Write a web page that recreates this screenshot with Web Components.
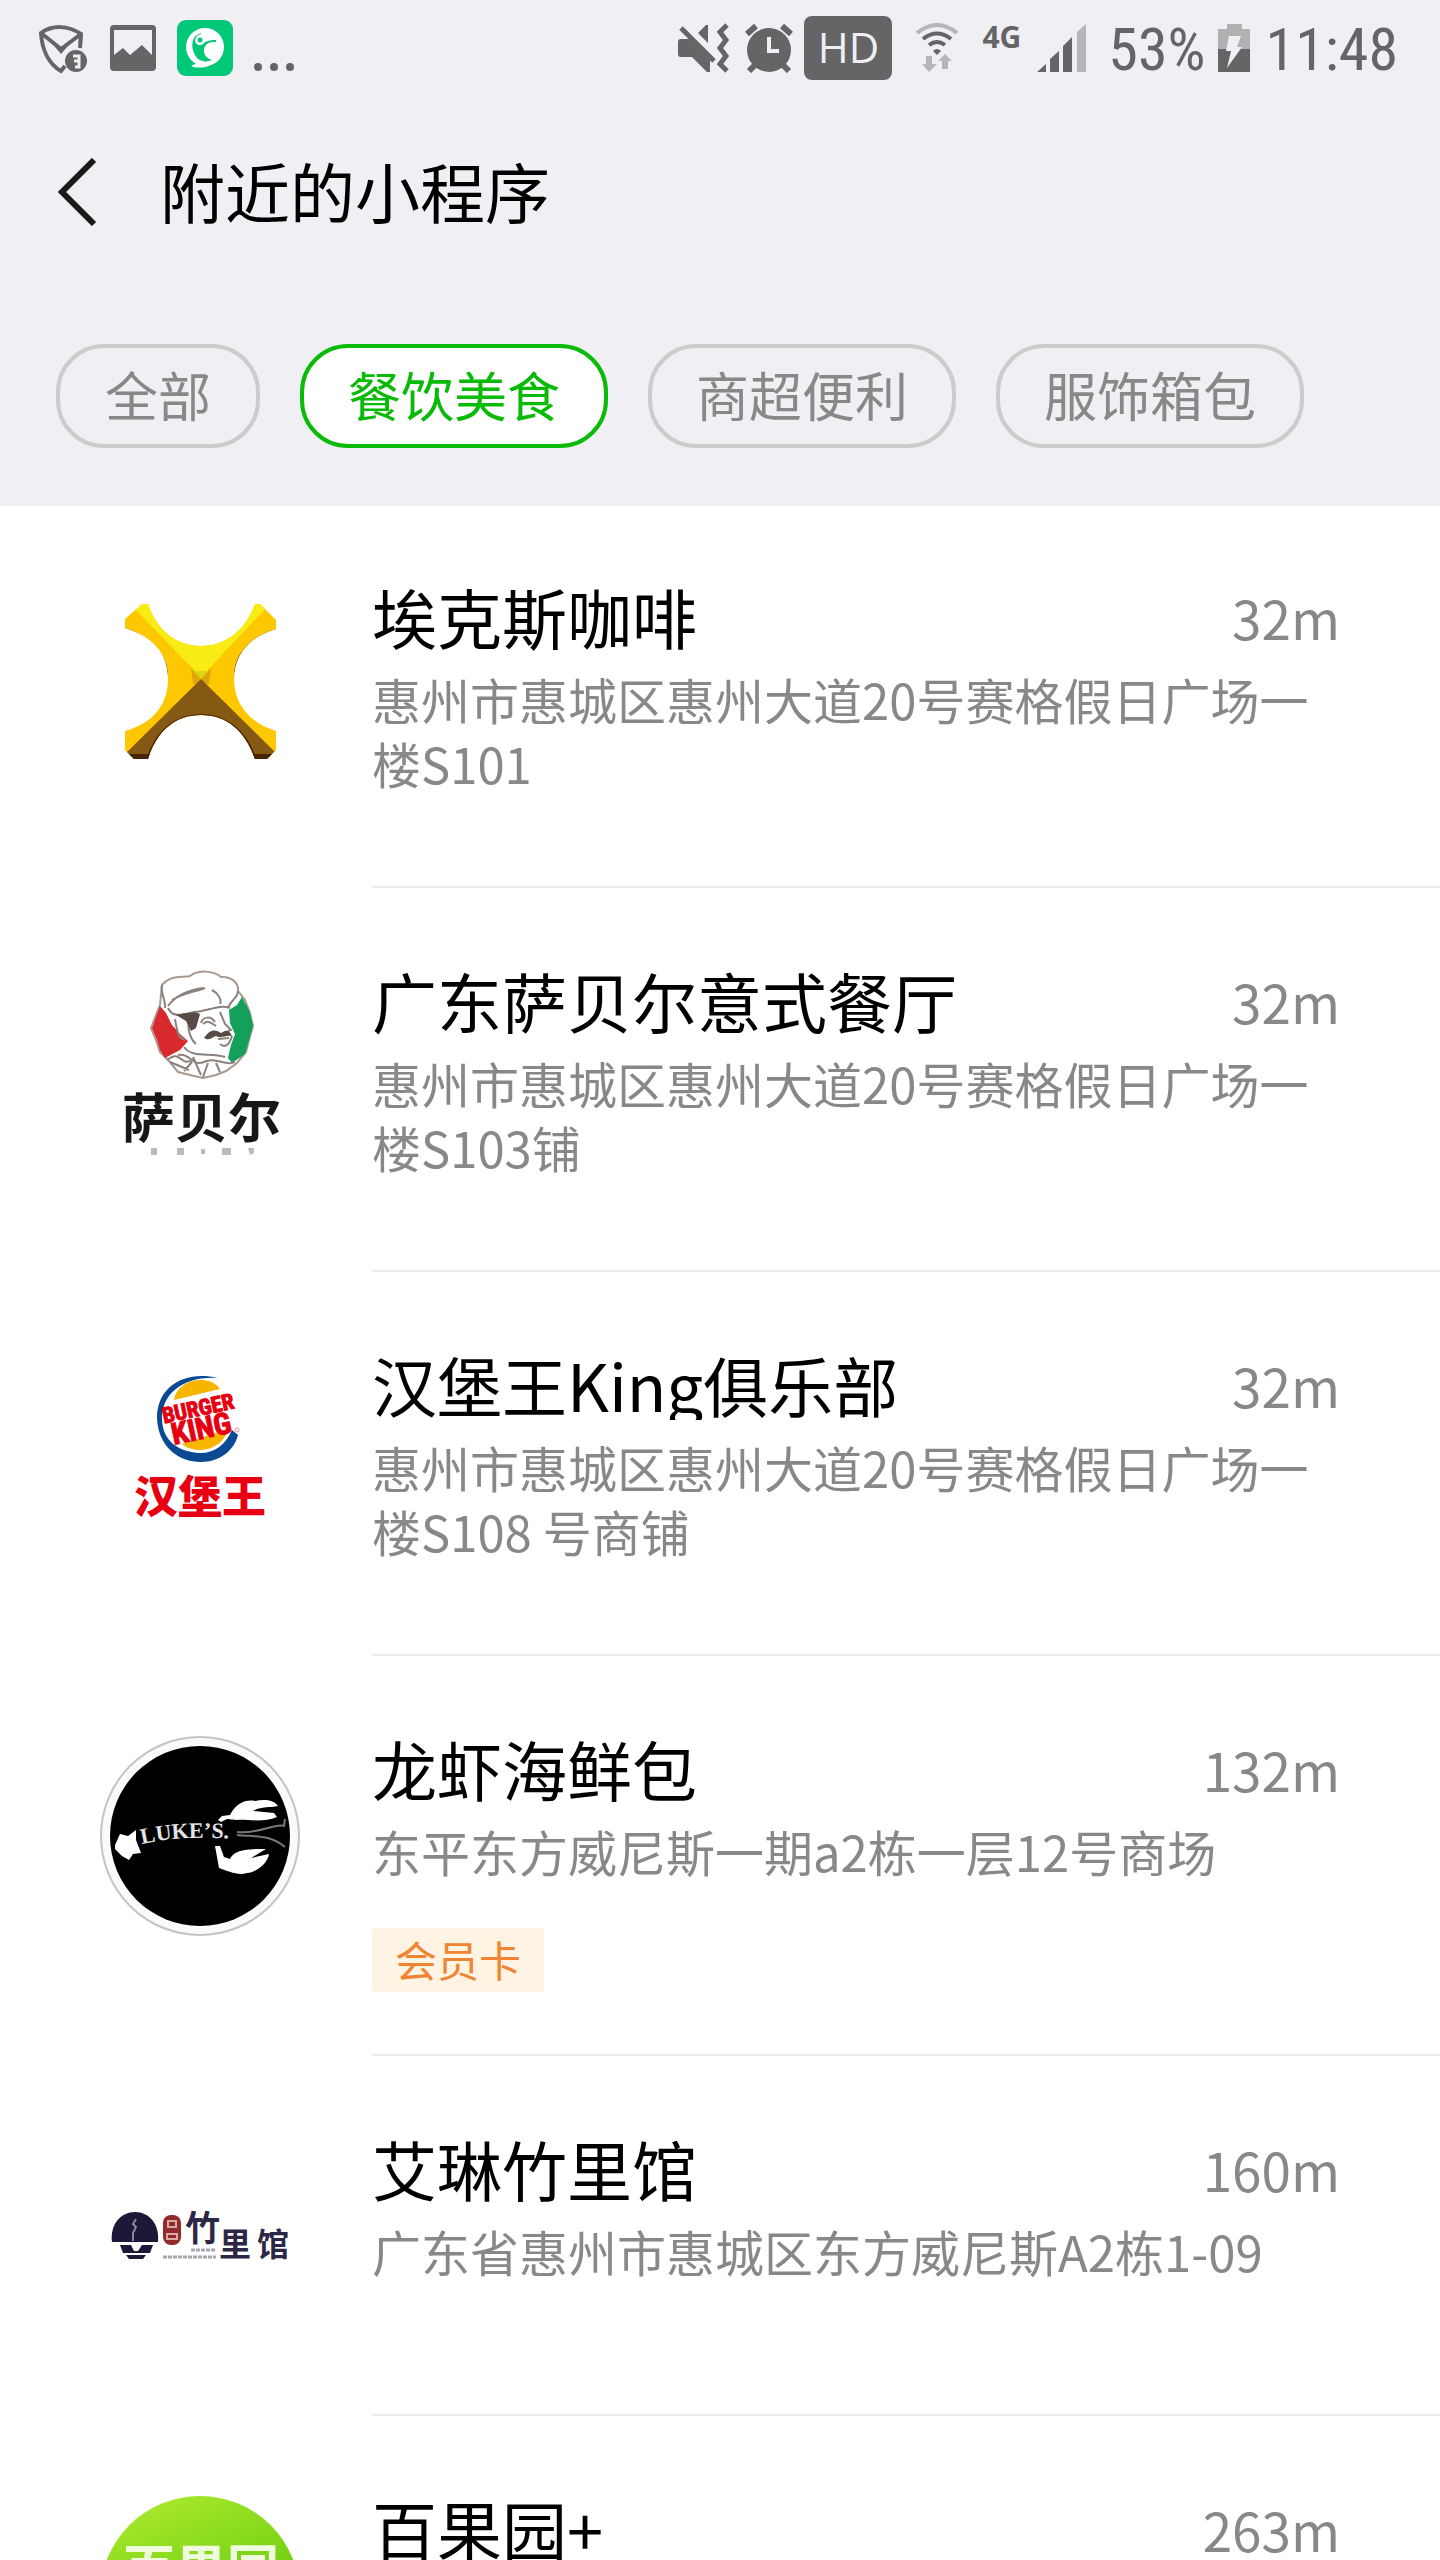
<!DOCTYPE html>
<html lang="zh-CN">
<head>
<meta charset="utf-8">
<meta name="viewport" content="width=device-width, initial-scale=1">
<title>附近的小程序</title>
<style>
    body {
        margin: 0;
        background: #fff;
        color: #000;
        font-family: 'Noto Sans CJK SC', 'Noto Sans', sans-serif;
    }
    nearby-page { --bar-bg: #efeff4; --green: #09bb07; --grey: #888; --line: #ececec; }
    svg text { font-family: 'Noto Sans CJK SC', sans-serif; }
    svg .latin { font-family: 'Roboto Condensed', Roboto, sans-serif; }
    svg .serif { font-family: 'Liberation Serif', serif; }
</style>
</head>
<body>
<nearby-page>
    <status-bar slot="header"></status-bar>
    <nav-bar slot="header">附近的小程序</nav-bar>
    <filter-bar slot="header">
        <filter-chip>全部</filter-chip>
        <filter-chip selected>餐饮美食</filter-chip>
        <filter-chip>商超便利</filter-chip>
        <filter-chip>服饰箱包</filter-chip>
    </filter-bar>

    <store-item distance="32m">
        <svg slot="logo" viewBox="0 0 200 200" aria-hidden="true">
            <clipPath id="x-shape">
                <path d="M42 20H48C57 47 77 62 101 62S145 47 155 20H160L176 36V45C149 53 134 71 134 95S149 139 176 147V166L167 175H155C145 146 126 131 101 131S57 146 48 175H34L25 166V147C53 139 68 121 68 95S53 53 25 44V35Z"/>
            </clipPath>
            <g clip-path="url(#x-shape)">
                <path fill="#fdc800" d="M20 15h160v165H20z"/>
                <path fill="#f7ec13" d="M30 20L101 93L170 20V10H30z"/>
                <path fill="#dda70c" d="M91 84l10 11 10-11-2 16H93z"/>
                <path fill="#dcd716" d="M94 87h14l-7 7z"/>
                <path fill="#855814" d="M101 95L182 175V185H20V175z"/>
                <path fill="none" stroke="#4a2408" stroke-width="4" d="M48 176C57 147 77 132 101 132S145 147 155 176"/>
                <path fill="#4a2408" d="M25 44C52 53 68 71 68 92C64 73 50 56 24 49zM176 45C149 53 134 71 134 92C138 73 152 56 177 49z"/>
                <path fill="#4a2408" d="M20 170h32v7H20zM151 170h30v7h-30z"/>
            </g>
        </svg>
        <span slot="name">埃克斯咖啡</span>
        惠州市惠城区惠州大道20号赛格假日广场一楼S101
    </store-item>

    <store-item distance="32m">
        <svg slot="logo" viewBox="0 0 200 200" aria-hidden="true">
            <path fill="#fff" stroke="#a99a90" stroke-width="2" d="M62 17C72 6 82 10 90 8C98 2 113 2 121 9C131 8 139 15 138 23L145 32L150 45L153 58L149 72L146 84L137 95L126 103L116 107L103 110L90 107L78 104L69 93L60 84L56 72L51 60L56 47L60 37Z"/>
            <path fill="#d8292f" d="M60 38L66 45L72 57L80 66L88 73L80 82L65 90L60 82L57 72L52 60Z"/>
            <path fill="#12a05a" d="M142 29L150 44L153 58L148 76L145 86L132 95L128 90L131 77L135 66L130 55L129 42L137 37Z"/>
            <g fill="none" stroke="#8a817c" stroke-width="2">
                <path d="M68 38C76 27 88 22 103 20M72 32C86 24 92 25 105 20M112 22C118 25 122 32 120 36M68 40C73 51 84 46 94 44C108 43 120 36 130 40M62 17C60 25 66 32 65 40M138 23C138 30 130 33 128 40"/>
                <path d="M67 92C82 80 80 101 94 91M78 87C91 85 92 99 104 94C115 88 126 99 135 94M84 79C93 91 110 84 125 89M84 103L92 94M103 109L108 95M120 104L116 95M93 89L101 107M70 94L89 102"/>
                <path d="M75 51C77 63 78 70 85 72M89 54C87 61 91 72 96 76M101 55C103 48 111 48 115 54M103 56C109 51 112 56 116 58M120 44L125 56L131 62L124 65M118 71L129 70M120 76C126 81 130 75 132 68"/>
            </g>
            <path fill="#594a45" d="M76 47C86 45 94 43 100 46L96 60L91 63L86 53ZM104 70C111 60 116 62 121 65C128 60 131 65 132 68C125 67 121 71 116 68C111 70 109 73 104 70Z"/>
            <text x="22" y="170" font-size="53" font-weight="700" fill="#171717">萨贝尔</text>
            <g fill="#bbb"><path d="M51 180h6v7h-6zM77 180h7v7h-7zM101 181h4v5h-4zM122 180h9v7h-9zM148 180h6v5l-4 2z"/></g>
        </svg>
        <span slot="name">广东萨贝尔意式餐厅</span>
        惠州市惠城区惠州大道20号赛格假日广场一楼S103铺
    </store-item>

    <store-item distance="32m">
        <svg slot="logo" viewBox="0 0 200 200" aria-hidden="true">
            <path fill="#f7b500" d="M74 48C76 35 88 28 101 28C110 28 117 32 120 37ZM82 92L128 77C125 90 114 97 101 98C94 98 87 96 82 92Z"/>
            <path fill="#0a4a94" d="M118 26C84 18 57 35 57 66C58 95 79 110 101 110C119 110 134 99 138 83L132 78C125 94 113 102 98 101C78 99 63 89 62 68C61 43 82 24 118 26Z"/>
            <g fill="#e60012" stroke="#e60012" stroke-width="1" text-anchor="middle" font-weight="700" transform="rotate(-12 99 66)">
                <text class="latin" x="100" y="64" font-size="22">BURGER</text>
                <text class="latin" x="99" y="87" font-size="30">KING</text>
            </g>
            <circle cx="137" cy="78" r="2" fill="none" stroke="#ef8a92"/>
            <text x="34" y="161" font-size="44" font-weight="900" fill="#e60012">汉堡王</text>
        </svg>
        <span slot="name">汉堡王King俱乐部</span>
        惠州市惠城区惠州大道20号赛格假日广场一楼S108 号商铺
    </store-item>

    <store-item distance="132m" tag="会员卡">
        <svg slot="logo" viewBox="0 0 200 200" aria-hidden="true">
            <circle cx="100" cy="100" r="99" fill="#fafafa" stroke="#c4c4c4" stroke-width="2"/>
            <circle cx="100" cy="100" r="90" fill="#000"/>
            <g fill="#fff">
                <path d="M15 109L20 98L28 100L36 94L36 104L41 117L33 118L29 124L22 120L15 113Z"/>
                <path d="M118 84L122 80L130 79C136 67 146 63 155 65C165 63 174 64 178 70C170 72 161 70 153 75L174 77L177 81C163 87 147 83 137 84L127 83L121 86Z"/>
                <path d="M115 110L120 110L124 121L130 123C135 113 148 114 155 113L166 113L151 122L169 118C168 127 157 136 147 137C138 140 128 135 119 132Z"/>
            </g>
            <path fill="none" stroke="#777" stroke-width="2" d="M137 96C157 99 177 86 184 90L185 83M137 99C155 101 170 98 185 111"/>
            <path id="luke-arc" fill="none" d="M42 108Q85 98 145 104"/>
            <text class="serif" font-size="22" font-weight="700" fill="#e4e4e4"><textPath href="#luke-arc">LUKE’S.</textPath></text>
        </svg>
        <span slot="name">龙虾海鲜包</span>
        东平东方威尼斯一期a2栋一层12号商场
    </store-item>

    <store-item distance="160m">
        <svg slot="logo" viewBox="0 0 200 200" aria-hidden="true">
            <path fill="#1d1838" d="M12 106C10 88 21 76 35 76S60 88 58 106ZM20 109H31L34 115H38L42 109H53L50 117H23ZM26 119H46L43 123H29Z"/>
            <path fill="none" stroke="#8b8798" stroke-width="2" d="M36 83L33 88L36 91L33 97V105"/>
            <rect x="63" y="79" width="18" height="30" rx="8" fill="#912a2b"/>
            <path fill="none" stroke="#dba9a5" stroke-width="2" d="M68 85h8v6h-8zM67 98h10v5H67z"/>
            <g fill="#2b2745" font-weight="700">
                <text x="85" y="105" font-size="35">竹</text>
                <text x="119" y="120" font-size="32">里</text>
                <text x="157" y="120" font-size="32">馆</text>
            </g>
            <path fill="none" stroke="#aaa6b0" stroke-width="3" stroke-dasharray="4 1" d="M91 114h24M63 121h53"/>
        </svg>
        <span slot="name">艾琳竹里馆</span>
        广东省惠州市惠城区东方威尼斯A2栋1-09
    </store-item>

    <store-item distance="263m">
        <svg slot="logo" viewBox="0 0 200 200" aria-hidden="true">
            <linearGradient id="fruit" x1="0.3" y1="0" x2="0.7" y2="1">
                <stop offset="0" stop-color="#a8e82c"/>
                <stop offset="0.5" stop-color="#76d114"/>
                <stop offset="1" stop-color="#4cb80c"/>
            </linearGradient>
            <circle cx="100" cy="100" r="100" fill="url(#fruit)"/>
            <text x="101" y="92" font-size="52" font-weight="700" text-anchor="middle" fill="#eefbdc">百果园</text>
        </svg>
        <span slot="name">百果园+</span>
    </store-item>
</nearby-page>

<script>
// Small helper: every element here is just a template in an open shadow root.
function mount(el, html) {
    const root = el.attachShadow({ mode: 'open' });
    root.innerHTML = html;
    return root;
}

class NearbyPage extends HTMLElement {
    constructor() {
        super();
        mount(this, `
            <style>
                :host { display: block; height: 100vh; overflow: hidden; }
                header { background: var(--bar-bg); padding-bottom: 58px; }
                main { margin-top: -2px; }
            </style>
            <header><slot name="header"></slot></header>
            <main><slot></slot></main>
        `);
    }
}

class StatusBar extends HTMLElement {
    constructor() {
        super();
        mount(this, `
            <style>
                :host {
                    display: flex;
                    justify-content: space-between;
                    align-items: center;
                    height: 96px;
                    padding: 0 42px 0 38px;
                    color: #656567;
                    font-family: 'Roboto Condensed', Roboto, sans-serif;
                    font-size: 60px;
                    line-height: 64px;
                }
                div { display: flex; align-items: center; }
                .left { gap: 20px; }
                .right { gap: 10px; }
                svg { display: block; fill: currentColor; }
                .hd {
                    width: 88px;
                    height: 64px;
                    border-radius: 8px;
                    background: #656567;
                    color: var(--bar-bg);
                    font: 42px/62px 'Open Sans', sans-serif;
                    text-align: center;
                }
                .net { font: 700 30px/32px 'Noto Sans', sans-serif; padding-bottom: 22px; }
                .text { padding-top: 4px; }
                .dots { margin-top: 38px; }
                .mute { margin-right: 4px; }
                .signal { margin-right: 7px; }
                .battery { margin: 0 6px 0 2px; }
            </style>
            <div class="left">
                <svg width="51" height="52" viewBox="0 0 51 52">
                    <path fill="none" stroke="currentColor" stroke-width="4" d="M42 26L43 12C30 3 14 3 3 11C4 28 11 42 23 49L27 44M3 11L23 27L43 12"/>
                    <path d="M12 19L23 26L35 18L23 32Z"/>
                    <circle cx="38" cy="39" r="11"/>
                    <path fill="none" stroke="#efeff4" stroke-width="3" d="M35 34h6v11h-4M36 39h5"/>
                </svg>
                <svg width="48" height="48" viewBox="0 0 48 48">
                    <path fill-rule="evenodd" d="M5 1H43Q47 1 47 5V43Q47 47 43 47H5Q1 47 1 43V5Q1 1 5 1ZM5 6V31L14 24L21 31L33 21L43 31V6Z"/>
                </svg>
                <svg width="56" height="56" viewBox="0 0 56 56">
                    <rect width="56" height="56" rx="9" fill="#00c878"/>
                    <circle cx="28" cy="27" r="19" fill="#fff"/>
                    <path fill="#fff" d="M17 38L20 43L14 46C21 49 33 48 39 41Z"/>
                    <path fill="#00c878" d="M24 13C11 17 15 33 21 39C25 42 31 42 35 40C27 38 24 29 30 24C33 22 36 22 39 22V20C32 20 29 21 26 24C23 26 19 25 18 21C19 17 20 15 24 14Z"/>
                    <circle cx="23" cy="20" r="4" fill="#fff"/>
                    <circle cx="23" cy="20" r="2.5" fill="#00c878"/>
                </svg>
                <svg class="dots" width="42" height="8" viewBox="0 0 42 8">
                    <circle cx="5" cy="4" r="4"/><circle cx="21" cy="4" r="4"/><circle cx="37" cy="4" r="4"/>
                </svg>
            </div>
            <div class="right">
                <svg class="mute" width="54" height="50" viewBox="0 0 54 50">
                    <path d="M5 16H13L34 37V49H31L16 34H5Q2 34 2 31V19Q2 16 5 16ZM32 2V20L22 10L30 2Z"/>
                    <path stroke="currentColor" stroke-width="5" d="M5 5L38 38"/>
                    <path fill="none" stroke="currentColor" stroke-width="5" d="M51 2L44 9L50 17L44 25L50 33L44 41L51 48"/>
                </svg>
                <svg width="50" height="50" viewBox="0 0 50 50">
                    <circle cx="25" cy="27" r="22"/>
                    <path fill="none" stroke="currentColor" stroke-width="6" d="M3 11L12 3M38 3L47 11M12 41L5 48M38 41L45 48"/>
                    <path fill="none" stroke="#efeff4" stroke-width="4" d="M25 14V28H35"/>
                </svg>
                <span class="hd">HD</span>
                <svg width="70" height="50" viewBox="0 0 70 50">
                    <g fill="none" stroke="currentColor" stroke-width="4">
                        <path stroke="#b5b5ba" d="M15 10Q35 -6 55 10"/>
                        <path d="M21 16Q35 5 49 16M27 22Q35 16 43 22"/>
                    </g>
                    <path d="M31 28Q35 24 39 28L35 32Z"/>
                    <path fill="#b5b5ba" d="M24 33h6v8h5L27 49L20 41h4zM40 46V38h-4L43 31L50 38H46V46z"/>
                </svg>
                <span class="net">4G</span>
                <svg class="signal" width="60" height="50" viewBox="0 0 60 50">
                    <path d="M6 49L15 41V49ZM19 36L28 28V49H19ZM32 23L41 14V49H32Z"/>
                    <path fill="#b5b5ba" d="M46 9L55 1V49H46Z"/>
                </svg>
                <span class="text">53%</span>
                <svg class="battery" width="32" height="50" viewBox="0 0 32 50">
                    <path fill="#b1b1b3" d="M9 1H24V6H32V26H0V6H9Z"/>
                    <path d="M0 26H32V49H0Z"/>
                    <path fill="#efeff4" d="M11 13H23L19 24H24L9 45L13 28H8Z"/>
                </svg>
                <time class="text">11:48</time>
            </div>
        `);
    }
}

class NavBar extends HTMLElement {
    constructor() {
        super();
        mount(this, `
            <style>
                :host { display: flex; align-items: center; height: 192px; padding: 0 56px; }
                button { border: 0; padding: 0; background: none; width: 104px; cursor: pointer; }
                svg { display: block; }
                h1 { margin: 0; padding-bottom: 4px; font-size: 65px; line-height: 96px; font-weight: 400; }
            </style>
            <button type="button" aria-label="返回">
                <svg width="44" height="68" viewBox="0 0 44 68">
                    <path fill="none" stroke="#1a1a1a" stroke-width="6" d="M38 2L6 34L38 66"/>
                </svg>
            </button>
            <h1><slot></slot></h1>
        `);
    }
}

class FilterBar extends HTMLElement {
    constructor() {
        super();
        mount(this, `
            <style>
                :host { display: block; }
                nav { display: flex; gap: 40px; padding: 56px 56px 0; }
            </style>
            <nav><slot></slot></nav>
        `);
    }
}

class FilterChip extends HTMLElement {
    constructor() {
        super();
        mount(this, `
            <style>
                :host { display: block; flex: none; }
                button {
                    display: block;
                    box-sizing: border-box;
                    min-width: 204px;
                    height: 104px;
                    padding: 0 44px 4px;
                    border: 4px solid #ccc;
                    border-radius: 48px;
                    background: transparent;
                    color: var(--grey);
                    font: inherit;
                    font-size: 53px;
                    line-height: 92px;
                    cursor: pointer;
                }
                :host([selected]) button { background: #fff; border-color: var(--green); color: var(--green); }
            </style>
            <button type="button"><slot></slot></button>
        `);
    }
}

class StoreItem extends HTMLElement {
    constructor() {
        super();
        this.root = this.attachShadow({ mode: 'open' });
    }

    connectedCallback() {
        const tag = this.getAttribute('tag');
        this.root.innerHTML = `
            <style>
                :host { display: flex; align-items: flex-start; gap: 72px; padding-left: 100px; }
                .logo { flex: none; width: 200px; height: 200px; margin-top: 80px; }
                ::slotted(svg) { display: block; width: 100%; height: 100%; }
                .body {
                    flex: 1;
                    min-width: 0;
                    min-height: 360px;
                    box-sizing: border-box;
                    padding: 76px 100px 62px 0;
                    border-bottom: 2px solid var(--line);
                }
                .head { display: flex; justify-content: space-between; align-items: flex-start; gap: 24px; }
                h2 {
                    margin: 0;
                    overflow: hidden;
                    font-size: 65px;
                    line-height: 72px;
                    font-weight: 400;
                    white-space: nowrap;
                }
                .distance { color: var(--grey); font-size: 53px; line-height: 74px; }
                p { margin: 13px 0 29px; color: var(--grey); font-size: 49px; line-height: 64px; }
                .tag {
                    display: inline-block;
                    margin-top: 16px;
                    padding: 0 23px 2px;
                    border-radius: 4px;
                    background: #fff4e3;
                    color: #f08531;
                    font-size: 42px;
                    line-height: 62px;
                    vertical-align: top;
                }
            </style>
            <div class="logo"><slot name="logo"></slot></div>
            <div class="body">
                <div class="head">
                    <h2><slot name="name"></slot></h2>
                    <span class="distance">${this.getAttribute('distance')}</span>
                </div>
                <p><slot></slot></p>
                ${tag ? `<span class="tag">${tag}</span>` : ''}
            </div>
        `;
    }
}

customElements.define('nearby-page', NearbyPage);
customElements.define('status-bar', StatusBar);
customElements.define('nav-bar', NavBar);
customElements.define('filter-bar', FilterBar);
customElements.define('filter-chip', FilterChip);
customElements.define('store-item', StoreItem);
</script>
</body>
</html>
